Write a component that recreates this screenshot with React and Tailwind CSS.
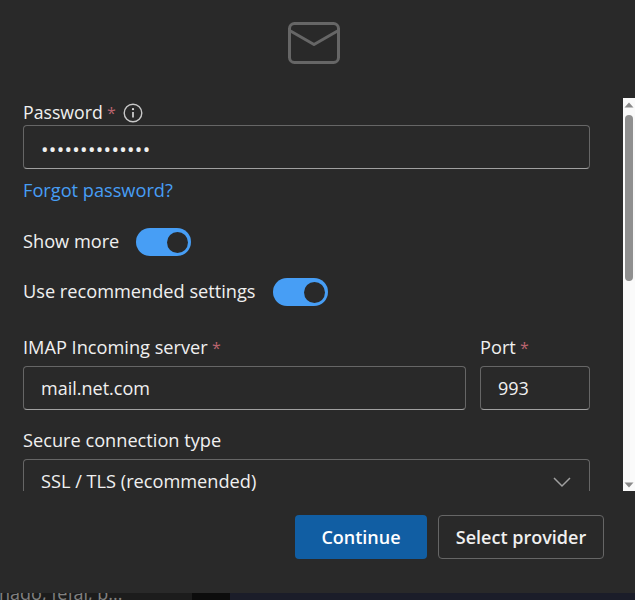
import React from 'react';

const font = { fontFamily: '"Open Sans", "Noto Sans", sans-serif' };

function Star() {
  return <span className="text-[#b9646e] text-[16px]"> *</span>;
}

function Toggle() {
  return (
    <div className="w-[55px] h-[28px] rounded-full bg-[#479ef5] flex items-center justify-end pr-[3px]">
      <div className="w-[21px] h-[21px] rounded-full bg-[#292929]" />
    </div>
  );
}

function Field({ className, children }) {
  return (
    <div className={`h-[44px] rounded border border-[#666666] border-b-[#a0a0a0] flex items-center px-[17px] text-[#f0f0f0] ${className}`}>
      {children}
    </div>
  );
}

function Scrollbar() {
  return (
    <div className="w-[12px] bg-[#fafafa] flex flex-col items-center">
      <svg width="12" height="12" viewBox="0 0 12 12" className="shrink-0 mt-[1px]">
        <path d="M1.5 8.5 L6 3.5 L10.5 8.5 Z" fill="#8a8a8a" />
      </svg>
      <div className="w-[8px] h-[166px] mt-[4px] rounded-full bg-[#8f8f8f]" />
      <div className="flex-1" />
      <svg width="12" height="12" viewBox="0 0 12 12" className="shrink-0">
        <path d="M1.5 3.5 L6 8.5 L10.5 3.5 Z" fill="#8a8a8a" />
      </svg>
    </div>
  );
}

export default function App() {
  return (
    <div className="w-[635px] h-[600px] bg-[#14161c] overflow-hidden flex flex-col" style={font}>
      <div className="h-[593px] shrink-0 bg-[#292929] flex flex-col">
        {/* Mail icon */}
        <div className="h-[98px] shrink-0 flex justify-center pt-[22px] pr-[8px]">
          <svg width="52" height="42" viewBox="0 0 52 42" fill="none" stroke="#666666" strokeWidth="3">
            <rect x="1.5" y="1.5" width="49" height="39" rx="5" />
            <path d="M2.5 9 L26 22.5 L49.5 9" strokeLinejoin="round" />
          </svg>
        </div>

        {/* Form */}
        <div className="h-[393px] shrink-0 flex">
          <div className="flex-1 overflow-hidden px-[23px] pt-[2px] text-[#f0f0f0] text-[18.2px]">
            <div className="flex items-center gap-[7px] h-[25px]">
              <span className="text-[17.7px]">Password<Star /></span>
              <svg width="20" height="20" viewBox="0 0 20 20" fill="none">
                <circle cx="10" cy="10" r="8.8" stroke="#c8c8c8" strokeWidth="1.4" />
                <circle cx="10" cy="6.2" r="1.1" fill="#e0e0e0" />
                <path d="M10 9v5.5" stroke="#e0e0e0" strokeWidth="1.6" />
              </svg>
            </div>
            <Field className="w-[567px] text-[20px] tracking-[0.3px] pt-[6px]">••••••••••••••</Field>
            <div className="mt-[9px] h-[25px] leading-[25px] text-[#479ef5]">Forgot password?</div>

            <div className="mt-[25px] flex items-center gap-[17px] h-[28px]">
              <span>Show more</span>
              <Toggle />
            </div>
            <div className="mt-[22px] flex items-center gap-[17px] h-[28px]">
              <span>Use recommended settings</span>
              <Toggle />
            </div>

            <div className="mt-[29px] flex gap-[14px] w-[567px]">
              <div className="flex-1">
                <div className="h-[25px] leading-[25px]">IMAP Incoming server<Star /></div>
                <Field className="mt-[6px] text-[18px]">mail.net.com</Field>
              </div>
              <div className="w-[110px]">
                <div className="h-[25px] leading-[25px]">Port<Star /></div>
                <Field className="mt-[6px] text-[18px]">993</Field>
              </div>
            </div>

            <div className="mt-[18px] h-[25px] leading-[25px]">Secure connection type</div>
            <Field className="w-[567px] mt-[6px] justify-between pr-[17px] pt-[2px]">
              <span>SSL / TLS (recommended)</span>
              <svg width="20" height="12" viewBox="0 0 20 12" fill="none" stroke="#a0a0a0" strokeWidth="1.5">
                <path d="M2 2 L10 10 L18 2" />
              </svg>
            </Field>
          </div>
          <Scrollbar />
        </div>

        {/* Actions */}
        <div className="flex justify-end gap-[11px] pt-[24px] pr-[31px]">
          <button className="w-[132px] h-[44px] rounded bg-[#115ea3] text-white text-[18px] font-semibold">Continue</button>
          <button className="w-[166px] h-[44px] rounded border border-[#666666] text-[#f0f0f0] text-[18px] font-semibold">Select provider</button>
        </div>
      </div>

      {/* Page behind the dialog */}
      <div className="flex-1 flex overflow-hidden">
        <div className="w-[192px] bg-[#1c1c1c] text-[#808080] text-[18px] leading-[20px] overflow-hidden">
          <div className="-mt-[10px] -ml-[1px] whitespace-nowrap">nado, fefal, b...</div>
        </div>
        <div className="w-[38px] bg-[#0c0c0c]" />
        <div className="flex-1 bg-[#1b1d29]" />
      </div>
    </div>
  );
}
